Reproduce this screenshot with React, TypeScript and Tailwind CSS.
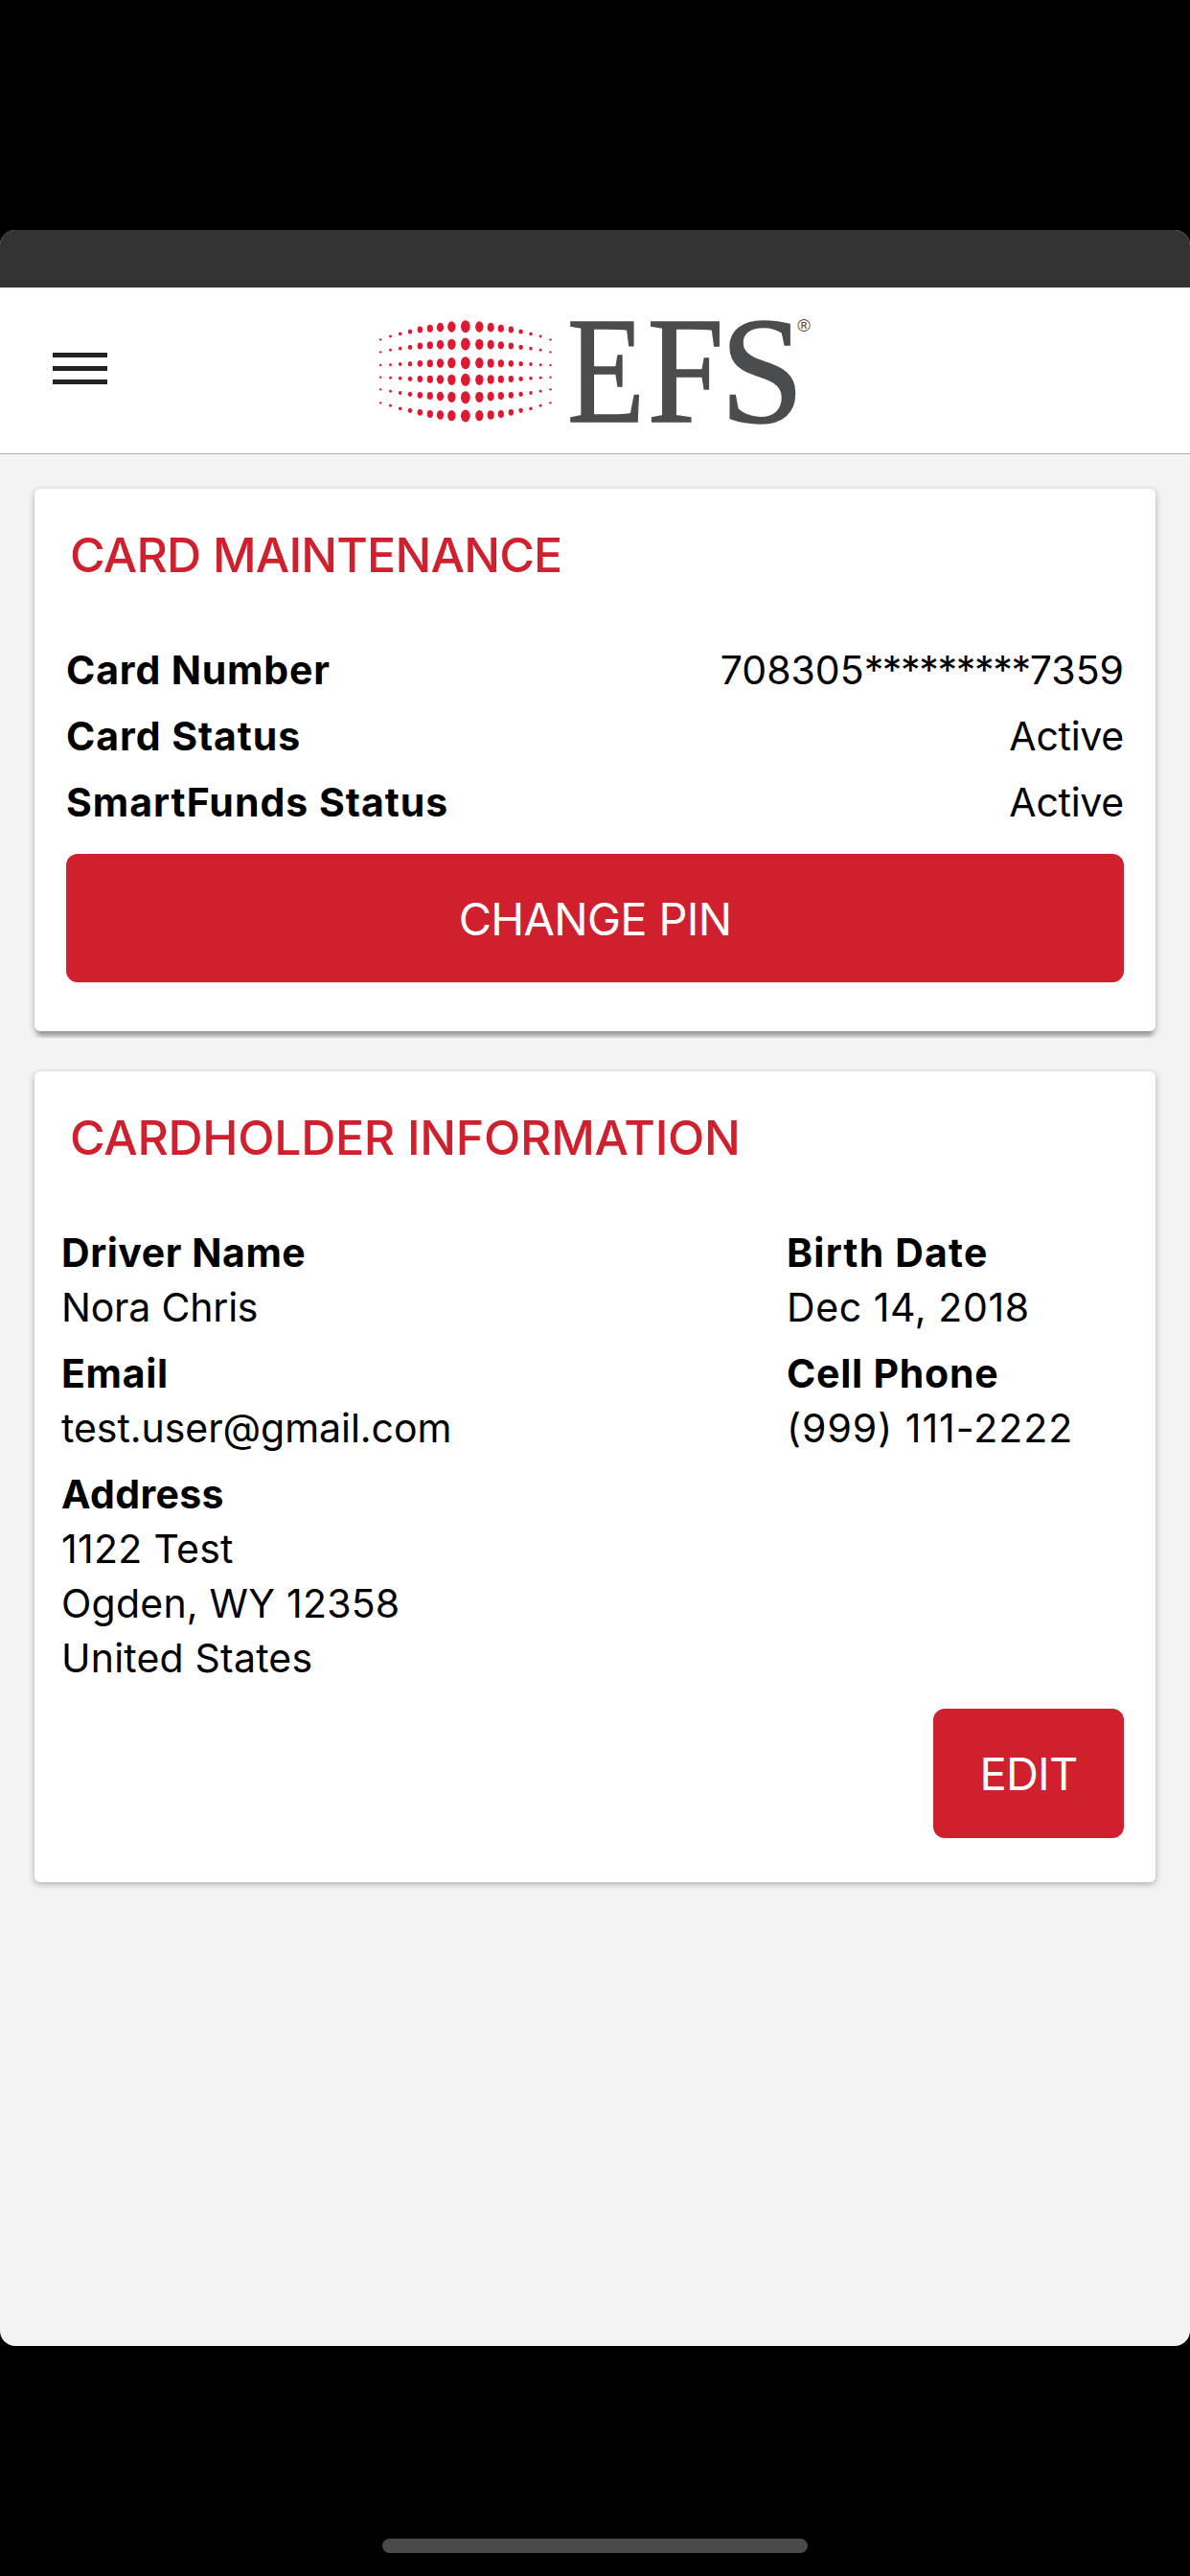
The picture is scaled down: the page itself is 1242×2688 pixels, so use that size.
import type { ReactNode } from "react";
import clsx from "clsx";

type Line = { text: string; tracking: string };
type Field = { label: Line; lines: Line[] };

const cardRows: { label: Line; value: ReactNode }[] = [
  {
    label: { text: "Card Number", tracking: "tracking-[0.85px]" },
    value: (
      <>
        708305<span className="tracking-[-1.3px]">*********</span>7359
      </>
    ),
  },
  {
    label: { text: "Card Status", tracking: "tracking-[0.95px]" },
    value: <span className="tracking-[-0.26px]">Active</span>,
  },
  {
    label: { text: "SmartFunds Status", tracking: "tracking-[1px]" },
    value: <span className="tracking-[-0.26px]">Active</span>,
  },
];

const mainFields: Field[] = [
  {
    label: { text: "Driver Name", tracking: "tracking-[0.55px]" },
    lines: [{ text: "Nora Chris", tracking: "tracking-[-0.2px]" }],
  },
  {
    label: { text: "Email", tracking: "tracking-[0.7px]" },
    lines: [{ text: "test.user@gmail.com", tracking: "tracking-[-0.05px]" }],
  },
  {
    label: { text: "Address", tracking: "tracking-[0.35px]" },
    lines: [
      { text: "1122 Test", tracking: "tracking-[0.3px]" },
      { text: "Ogden, WY 12358", tracking: "tracking-[0.22px]" },
      { text: "United States", tracking: "tracking-[0.2px]" },
    ],
  },
];

const sideFields: Field[] = [
  {
    label: { text: "Birth Date", tracking: "tracking-[1.2px]" },
    lines: [{ text: "Dec 14, 2018", tracking: "tracking-[0.6px]" }],
  },
  {
    label: { text: "Cell Phone", tracking: "tracking-[0.75px]" },
    lines: [{ text: "(999) 111-2222", tracking: "tracking-[1px]" }],
  },
];

// Globe dots, from the centre column outwards. The art is symmetric around x = 317.5.
const dotColumns = [
  { dx: 0, rx: 14.6, ry: 19.5, ys: [62, 117, 176, 229, 284, 342] },
  { dx: 43.5, rx: 12.6, ry: 17, ys: [63, 118, 176, 229, 283, 341] },
  { dx: 79, rx: 10.8, ry: 14.4, ys: [65, 119, 177, 228, 281, 339] },
  { dx: 111, rx: 9.4, ry: 12, ys: [68, 121, 178, 227, 279, 336] },
  { dx: 142.5, rx: 8.2, ry: 10.3, ys: [72, 123, 178, 226.5, 277, 331] },
  { dx: 173.5, rx: 6.8, ry: 7.8, ys: [78, 127, 179, 226, 274, 325] },
  { dx: 204.5, rx: 5.2, ry: 5.7, ys: [85, 131, 180, 224, 270, 319] },
  { dx: 235, rx: 4.3, ry: 4.4, ys: [93, 136, 182, 223, 265, 310] },
  { dx: 266, rx: 3.6, ry: 3.6, ys: [103, 142, 183, 221, 259, 301] },
];

function EfsLogo() {
  return (
    <svg
      width="452"
      height="120"
      viewBox="395 326 452 120"
      className="overflow-visible"
      role="img"
      aria-label="EFS"
    >
      <g fill="#dd1a32" transform="translate(380 320) scale(0.33333)">
        {dotColumns.map(({ dx, rx, ry, ys }) =>
          (dx === 0 ? [0] : [-dx, dx]).map((offset) =>
            ys.map((y) => (
              <ellipse key={`${offset}-${y}`} cx={317.5 + offset} cy={y} rx={rx} ry={ry} />
            ))
          )
        )}
      </g>
      <g
        fill="#4b4c4e"
        stroke="#4b4c4e"
        strokeWidth="1.4"
        fontSize="158"
        className="font-['Liberation_Serif',serif]"
      >
        <text transform="translate(592 439.5) scale(0.84 1)">E</text>
        <text transform="translate(675.5 439.5) scale(0.91 1)">F</text>
        <text transform="translate(751.5 439.5)">S</text>
      </g>
      <text
        x="839"
        y="345.5"
        textAnchor="middle"
        fontSize="18.5"
        fill="#4b4c4e"
        className="font-['Liberation_Sans',sans-serif]"
      >
        ®
      </text>
    </svg>
  );
}

function Card({
  title,
  titleClassName,
  className,
  shadowClassName,
  children,
}: {
  title: string;
  titleClassName: string;
  className?: string;
  shadowClassName: string;
  children: ReactNode;
}) {
  return (
    <div className={clsx("overflow-hidden px-9 pt-[3px]", className)}>
      <section className={clsx("rounded-md bg-white pt-[39px]", shadowClassName)}>
        <h2
          className={clsx(
            "pl-[37px] text-[50px] font-medium leading-[60px] text-[#d0202e]",
            titleClassName
          )}
        >
          {title}
        </h2>
        {children}
      </section>
    </div>
  );
}

function FieldColumn({ fields }: { fields: Field[] }) {
  return (
    <dl className="flex flex-col gap-3 leading-[57px]">
      {fields.map(({ label, lines }) => (
        <div key={label.text}>
          <dt className={clsx("font-bold", label.tracking)}>{label.text}</dt>
          {lines.map((line) => (
            <dd key={line.text} className={line.tracking}>
              {line.text}
            </dd>
          ))}
        </div>
      ))}
    </dl>
  );
}

export default function App() {
  return (
    <div className="flex h-[2688px] w-[1242px] flex-col bg-black pt-60 font-['Inter',sans-serif] text-[41px] text-black">
      <div className="flex h-[2208px] flex-col overflow-hidden rounded-2xl bg-[#f3f3f3]">
        <div className="h-[60px] shrink-0 bg-[#333333]" />

        <header className="flex h-[174px] shrink-0 items-start justify-between border-b border-[#b0b0b0] bg-white px-[55px] pt-[26px]">
          <button aria-label="Menu" className="mt-[42px] flex w-[57px] flex-col gap-[9px]">
            <span className="h-[5px] w-full bg-[#222222]" />
            <span className="h-[5px] w-full bg-[#222222]" />
            <span className="h-[5px] w-full bg-[#222222]" />
          </button>
          <EfsLogo />
          <div className="w-[57px]" />
        </header>

        <Card
          title="CARD MAINTENANCE"
          titleClassName="tracking-[-0.79px]"
          className="mt-[33px] pb-[7px]"
          shadowClassName="shadow-[0_2px_7px_rgba(0,0,0,0.3),0_9px_5px_-3px_rgba(0,0,0,0.22)]"
        >
          <dl className="mt-14 px-[33px] leading-[69px]">
            {cardRows.map(({ label, value }) => (
              <div key={label.text} className="flex justify-between">
                <dt className={clsx("font-bold", label.tracking)}>{label.text}</dt>
                <dd>{value}</dd>
              </div>
            ))}
          </dl>
          <div className="px-[33px] pb-[51px] pt-[19px]">
            <button className="h-[134px] w-full rounded-xl bg-[#d0202e] pt-0.5 text-[47px] tracking-[-0.7px] text-white">
              CHANGE PIN
            </button>
          </div>
        </Card>

        <Card
          title="CARDHOLDER INFORMATION"
          titleClassName="tracking-[-0.3px]"
          className="mt-8 pb-5"
          shadowClassName="shadow-[0_2px_7px_rgba(0,0,0,0.3)]"
        >
          <div className="mt-[62px] flex pl-7">
            <div className="w-[757px]">
              <FieldColumn fields={mainFields} />
            </div>
            <FieldColumn fields={sideFields} />
          </div>
          <div className="flex justify-end pb-[46px] pr-[33px] pt-6">
            <button className="h-[135px] w-[199px] rounded-xl bg-[#d0202e] pt-0.5 text-[47px] tracking-[-0.76px] text-white">
              EDIT
            </button>
          </div>
        </Card>
      </div>

      <div className="mx-auto mb-6 mt-auto h-[15px] w-[444px] rounded-full bg-[#4a4a4a]" />
    </div>
  );
}
